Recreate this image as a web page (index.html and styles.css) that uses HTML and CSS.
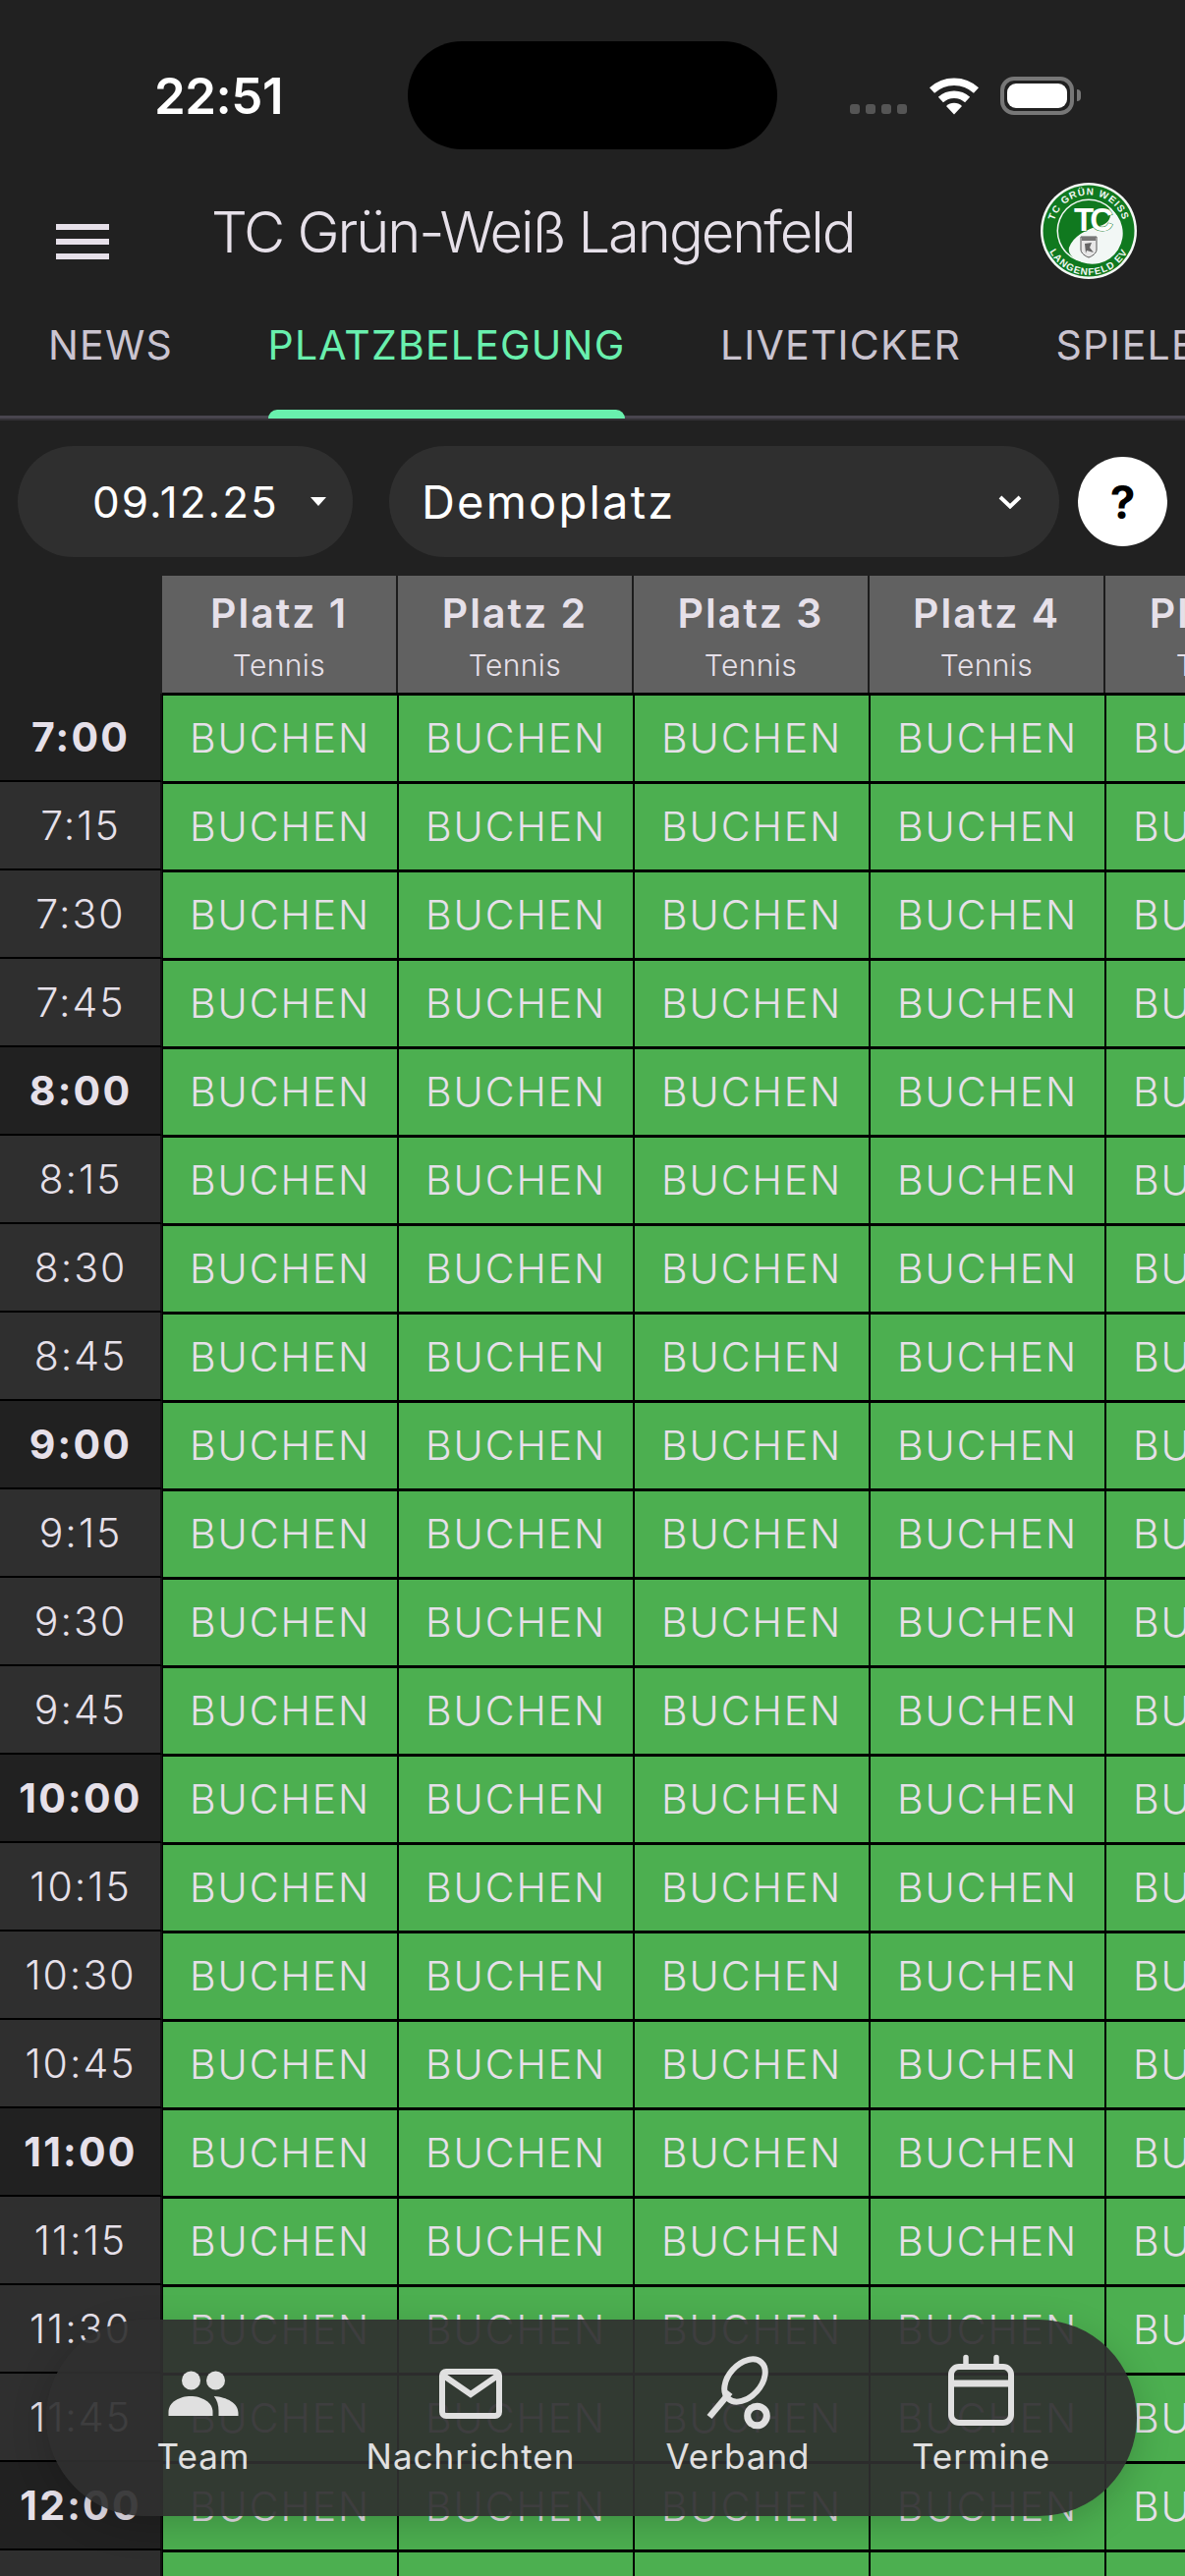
FILE: index.html
```html
<!DOCTYPE html>
<html lang="de">
<head>
<meta charset="utf-8">
<title>TC Grün-Weiß Langenfeld</title>
<link rel="stylesheet" href="styles.css">
</head>
<body>
<div class="screen">
  <div class="status">
    <span class="clock">22:51</span>
    <div class="island"></div>
    <div class="dots"><i></i><i></i><i></i><i></i></div>
    <svg class="wifi" viewBox="0 0 50 38" width="50" height="38"><g fill="none" stroke="#fff" stroke-width="7.5"><path d="M2.500 13 A33 33 0 0 1 47.500 13"/><path d="M11.400 22.500 A20 20 0 0 1 38.600 22.500"/></g><path d="M25 37.500 L17 29 A11.500 11.500 0 0 1 33 29 Z" fill="#fff"/></svg>
    <div class="battery"><div class="battery-fill"></div></div>
    <div class="battery-tip"></div>
  </div>

  <header class="appbar">
    <div class="menu"><i></i><i></i><i></i></div>
    <h1 class="title">TC Grün-Weiß Langenfeld</h1>
    <svg class="logo" viewBox="0 0 98 98" width="98" height="98">
      <defs>
        <path id="ring-top" d="M12.500 49 A36.500 36.500 0 0 1 85.500 49"/>
        <path id="ring-bottom" d="M4 49 A45 45 0 0 0 94 49"/>
      </defs>
      <circle cx="49" cy="49" r="49" fill="#f4f7f5"/>
      <circle cx="49" cy="49" r="46.500" fill="#10791f"/>
      <circle cx="49" cy="49" r="32.500" fill="#f2f7f5"/>
      <circle cx="49" cy="49" r="31" fill="#10791f"/>
      <path d="M69 25 C73 31 72 41 60 44 C46 47 33 55 29 66 C28 71 31 75 36 78 A31 31 0 0 0 69 25 Z" fill="#f2f7f5"/>
      <text class="logo-tc" x="52" y="49" text-anchor="middle">TC</text>
      <path d="M41 55 H57 V68 C57 72 52 75 49 76 C46 75 41 72 41 68 Z" fill="#e8e8e8" stroke="#555" stroke-width="1"/>
      <path d="M42 55 H56 V59 H42 Z" fill="#777"/>
      <path d="M45 62 L52 61 L50 66 L54 71 L47 69 L46 72 Z" fill="#666"/>
      <text class="logo-ring"><textPath href="#ring-top" startOffset="50%" text-anchor="middle">TC GRÜN WEISS</textPath></text>
      <text class="logo-ring"><textPath href="#ring-bottom" startOffset="50%" text-anchor="middle">LANGENFELD EV</textPath></text>
    </svg>
  </header>

  <nav class="tabs">
    <div class="tab"><span>NEWS</span><i></i></div>
    <div class="tab active"><span>PLATZBELEGUNG</span><i></i></div>
    <div class="tab"><span>LIVETICKER</span><i></i></div>
    <div class="tab"><span>SPIELE</span><i></i></div>
  </nav>

  <div class="filters">
    <div class="pill pill-date"><span>09.12.25</span><b class="caret"></b></div>
    <div class="pill pill-place"><span>Demoplatz</span>
      <svg class="chevron" viewBox="0 0 24 14" width="24" height="14"><path d="M2 2 L12 11.500 L22 2" fill="none" stroke="#fff" stroke-width="4"/></svg>
    </div>
    <div class="help">?</div>
  </div>

  <div class="table">
    <div class="corner"></div>
    <div class="head"><strong>Platz 1</strong><small>Tennis</small></div>
    <div class="head"><strong>Platz 2</strong><small>Tennis</small></div>
    <div class="head"><strong>Platz 3</strong><small>Tennis</small></div>
    <div class="head"><strong>Platz 4</strong><small>Tennis</small></div>
    <div class="head"><strong>Platz 5</strong><small>Tennis</small></div>

    <div class="time hour">7:00</div><div class="book">BUCHEN</div><div class="book">BUCHEN</div><div class="book">BUCHEN</div><div class="book">BUCHEN</div><div class="book">BUCHEN</div>
    <div class="time">7:15</div><div class="book">BUCHEN</div><div class="book">BUCHEN</div><div class="book">BUCHEN</div><div class="book">BUCHEN</div><div class="book">BUCHEN</div>
    <div class="time">7:30</div><div class="book">BUCHEN</div><div class="book">BUCHEN</div><div class="book">BUCHEN</div><div class="book">BUCHEN</div><div class="book">BUCHEN</div>
    <div class="time">7:45</div><div class="book">BUCHEN</div><div class="book">BUCHEN</div><div class="book">BUCHEN</div><div class="book">BUCHEN</div><div class="book">BUCHEN</div>
    <div class="time hour">8:00</div><div class="book">BUCHEN</div><div class="book">BUCHEN</div><div class="book">BUCHEN</div><div class="book">BUCHEN</div><div class="book">BUCHEN</div>
    <div class="time">8:15</div><div class="book">BUCHEN</div><div class="book">BUCHEN</div><div class="book">BUCHEN</div><div class="book">BUCHEN</div><div class="book">BUCHEN</div>
    <div class="time">8:30</div><div class="book">BUCHEN</div><div class="book">BUCHEN</div><div class="book">BUCHEN</div><div class="book">BUCHEN</div><div class="book">BUCHEN</div>
    <div class="time">8:45</div><div class="book">BUCHEN</div><div class="book">BUCHEN</div><div class="book">BUCHEN</div><div class="book">BUCHEN</div><div class="book">BUCHEN</div>
    <div class="time hour">9:00</div><div class="book">BUCHEN</div><div class="book">BUCHEN</div><div class="book">BUCHEN</div><div class="book">BUCHEN</div><div class="book">BUCHEN</div>
    <div class="time">9:15</div><div class="book">BUCHEN</div><div class="book">BUCHEN</div><div class="book">BUCHEN</div><div class="book">BUCHEN</div><div class="book">BUCHEN</div>
    <div class="time">9:30</div><div class="book">BUCHEN</div><div class="book">BUCHEN</div><div class="book">BUCHEN</div><div class="book">BUCHEN</div><div class="book">BUCHEN</div>
    <div class="time">9:45</div><div class="book">BUCHEN</div><div class="book">BUCHEN</div><div class="book">BUCHEN</div><div class="book">BUCHEN</div><div class="book">BUCHEN</div>
    <div class="time hour">10:00</div><div class="book">BUCHEN</div><div class="book">BUCHEN</div><div class="book">BUCHEN</div><div class="book">BUCHEN</div><div class="book">BUCHEN</div>
    <div class="time">10:15</div><div class="book">BUCHEN</div><div class="book">BUCHEN</div><div class="book">BUCHEN</div><div class="book">BUCHEN</div><div class="book">BUCHEN</div>
    <div class="time">10:30</div><div class="book">BUCHEN</div><div class="book">BUCHEN</div><div class="book">BUCHEN</div><div class="book">BUCHEN</div><div class="book">BUCHEN</div>
    <div class="time">10:45</div><div class="book">BUCHEN</div><div class="book">BUCHEN</div><div class="book">BUCHEN</div><div class="book">BUCHEN</div><div class="book">BUCHEN</div>
    <div class="time hour">11:00</div><div class="book">BUCHEN</div><div class="book">BUCHEN</div><div class="book">BUCHEN</div><div class="book">BUCHEN</div><div class="book">BUCHEN</div>
    <div class="time">11:15</div><div class="book">BUCHEN</div><div class="book">BUCHEN</div><div class="book">BUCHEN</div><div class="book">BUCHEN</div><div class="book">BUCHEN</div>
    <div class="time">11:30</div><div class="book">BUCHEN</div><div class="book">BUCHEN</div><div class="book">BUCHEN</div><div class="book">BUCHEN</div><div class="book">BUCHEN</div>
    <div class="time">11:45</div><div class="book">BUCHEN</div><div class="book">BUCHEN</div><div class="book">BUCHEN</div><div class="book">BUCHEN</div><div class="book">BUCHEN</div>
    <div class="time hour">12:00</div><div class="book">BUCHEN</div><div class="book">BUCHEN</div><div class="book">BUCHEN</div><div class="book">BUCHEN</div><div class="book">BUCHEN</div>
    <div class="time">12:15</div><div class="book">BUCHEN</div><div class="book">BUCHEN</div><div class="book">BUCHEN</div><div class="book">BUCHEN</div><div class="book">BUCHEN</div>
  </div>

  <nav class="bottomnav">
    <div class="nav-item">
      <svg viewBox="0 0 80 80" width="80" height="80"><g fill="#e0e0e0"><circle cx="27.500" cy="27" r="9.500"/><circle cx="52.500" cy="27" r="9.500"/><path d="M4.500 63 V59 C4.500 49 16 43 27 43 C38 43 49.500 49 49.500 59 V63 Z"/><path d="M50.800 43 C64 44 75.500 50 75.500 60 V63 H55.500 V58 C55.500 52 54 47 50.800 43 Z"/></g></svg>
      <span>Team</span>
    </div>
    <div class="nav-item">
      <svg viewBox="0 0 80 80" width="80" height="80"><g fill="none" stroke="#e0e0e0" stroke-width="6"><rect x="11" y="18" width="58" height="45" rx="4"/><path d="M11 21 L40 41 L69 21"/></g></svg>
      <span>Nachrichten</span>
    </div>
    <div class="nav-item">
      <svg viewBox="0 0 80 80" width="80" height="80"><g fill="none" stroke="#e0e0e0"><ellipse cx="47" cy="27" rx="25" ry="16.500" stroke-width="6" transform="rotate(-48 47 27)"/><path d="M32 39 L11 64" stroke-width="6.500"/><circle cx="59.500" cy="63" r="9.800" stroke-width="7"/></g></svg>
      <span>Verband</span>
    </div>
    <div class="nav-item">
      <svg viewBox="0 0 80 80" width="80" height="80"><g fill="none" stroke="#e0e0e0"><rect x="9" y="13" width="61" height="57" rx="8" stroke-width="6"/><path d="M9 30 H70" stroke-width="7"/><path d="M24 3.500 V13 M55 3.500 V13" stroke-width="5.500" stroke-linecap="round"/></g></svg>
      <span>Termine</span>
    </div>
  </nav>
</div>
</body>
</html>
```
FILE: styles.css
```css
* { box-sizing: border-box; }

html, body {
  margin: 0;
  padding: 0;
  background: #212121;
}

.screen {
  position: relative;
  width: 1206px;
  height: 2622px;
  overflow: hidden;
  background: #212121;
  color: #e6e0e9;
  font-family: Inter, "Liberation Sans", sans-serif;
}

/* status bar */
.status {
  position: relative;
  display: flex;
  align-items: flex-start;
  height: 170px;
  padding-top: 42px;
}

.clock {
  width: 257px;
  margin-left: 157px;
  margin-top: 26px;
  margin-right: 1px;
  font-size: 51px;
  line-height: 60px;
  font-weight: 600;
  letter-spacing: -0.5px;
  color: #fff;
}

.island {
  width: 376px;
  height: 110px;
  border-radius: 55px;
  background: #000;
}

.dots {
  display: flex;
  gap: 6px;
  margin-left: 74px;
  margin-top: 64px;
}

.dots i {
  width: 10px;
  height: 10px;
  border-radius: 3px;
  background: #555;
}

.wifi {
  margin-left: 23px;
  margin-top: 37px;
}

.battery {
  width: 75px;
  height: 39px;
  margin-left: 22px;
  margin-top: 36px;
  padding: 3px;
  border: 4px solid #777;
  border-radius: 14px;
}

.battery-fill {
  width: 100%;
  height: 100%;
  border-radius: 9px;
  background: #fff;
}

.battery-tip {
  width: 4px;
  height: 12px;
  margin-left: 3px;
  margin-top: 49px;
  border-radius: 0 4px 4px 0;
  background: #777;
}

/* app bar */
.appbar {
  display: flex;
  align-items: flex-start;
  height: 140px;
}

.menu {
  display: flex;
  flex-direction: column;
  gap: 9px;
  width: 54px;
  margin-left: 57px;
  margin-top: 58px;
}

.menu i {
  height: 6px;
  background: #e6e0e9;
}

.title {
  width: 843px;
  margin: 32px 0 0 104px;
  font-size: 58px;
  line-height: 68px;
  font-weight: 300;
  letter-spacing: -2.1px;
  white-space: nowrap;
}

.logo {
  margin-top: 16px;
  margin-left: 1px;
}

.logo-tc {
  font-family: "Liberation Sans", sans-serif;
  font-size: 33px;
  font-weight: 700;
  letter-spacing: -4px;
  fill: #fff;
  stroke: #10791f;
  stroke-width: 1px;
  paint-order: stroke;
}

.logo-ring {
  font-family: "Liberation Sans", sans-serif;
  font-size: 10px;
  font-weight: 700;
  letter-spacing: 1px;
  fill: #f2f7f5;
}

/* tabs */
.tabs {
  display: flex;
  gap: 96.5px;
  height: 116px;
  padding-left: 49px;
  overflow: hidden;
  box-shadow: inset 0 -3px 0 #49454f, 0 2px 0 #333136;
}

.tab {
  display: flex;
  flex-direction: column;
  justify-content: space-between;
  flex: none;
  padding-top: 16px;
  color: #cac4d0;
  font-size: 41px;
  line-height: 50px;
  letter-spacing: 1.2px;
  font-weight: 400;
  white-space: nowrap;
}

.tab i {
  display: block;
  height: 9px;
  border-radius: 9px 9px 0 0;
}

.tab.active {
  color: #69f0ae;
}

.tab.active i {
  background: #69f0ae;
}

/* filter row */
.filters {
  display: flex;
  align-items: center;
  height: 160px;
  padding: 28px 0 19px 18px;
}

.pill {
  display: flex;
  align-items: center;
  height: 113px;
  border-radius: 57px;
  background: #2f2f2f;
  color: #fff;
}

.pill-date {
  width: 341px;
  padding-left: 76px;
  font-size: 44px;
  letter-spacing: 2px;
}

.caret {
  width: 0;
  height: 0;
  margin-left: 32px;
  border-left: 8px solid transparent;
  border-right: 8px solid transparent;
  border-top: 9px solid #fff;
}

.pill-place {
  justify-content: space-between;
  width: 682px;
  margin-left: 37px;
  padding: 0 38px 0 33px;
  font-size: 47px;
  letter-spacing: 2.2px;
}

.help {
  display: flex;
  align-items: center;
  justify-content: center;
  width: 91px;
  height: 91px;
  margin-left: 19px;
  border-radius: 50%;
  background: #fff;
  color: #000;
  font-size: 46px;
  font-weight: 700;
}

/* table */
.table {
  display: grid;
  grid-template-columns: 165px repeat(5, 240px);
  grid-template-rows: 120px;
  grid-auto-rows: 90px;
  width: max-content;
  background: #000;
}

.corner {
  background: #212121;
}

.head {
  display: flex;
  flex-direction: column;
  align-items: center;
  height: 119px;
  padding-top: 13px;
  border-right: 2px solid #1c1c1c;
  background: #616161;
}

.head strong {
  font-size: 41px;
  line-height: 50px;
  font-weight: 600;
  letter-spacing: 2px;
}

.head small {
  margin-top: 10px;
  font-size: 30px;
  line-height: 36px;
  font-weight: 300;
  letter-spacing: 0.4px;
}

.time {
  display: flex;
  align-items: center;
  justify-content: center;
  width: 165px;
  padding-left: 1px;
  border-right: 2px solid #111;
  border-bottom: 2px solid #000;
  background: #2f2f2f;
  font-size: 41px;
  font-weight: 300;
  letter-spacing: 2px;
}

.time.hour {
  background: #212121;
  font-weight: 700;
  letter-spacing: 2.2px;
}

.book {
  display: flex;
  align-items: center;
  justify-content: center;
  margin: 1.5px 1px 1px;
  background: #4caf50;
  font-size: 41px;
  font-weight: 300;
  letter-spacing: 1.9px;
}

/* floating navigation */
.bottomnav {
  position: absolute;
  left: 47px;
  bottom: 61px;
  display: grid;
  grid-template-columns: 272px 272px 272px 223px;
  width: 1110px;
  height: 200px;
  padding: 35px 0 0 24px;
  border-radius: 100px;
  background: rgba(48, 48, 48, 0.92);
  box-shadow: 0 10px 36px rgba(0, 0, 0, 0.18);
}

.nav-item {
  display: flex;
  flex-direction: column;
  align-items: center;
  color: #e0e0e0;
  font-size: 35px;
  line-height: 42px;
  letter-spacing: 1px;
}

.nav-item svg {
  display: block;
}

.nav-item span {
  margin-top: 3px;
}
```
